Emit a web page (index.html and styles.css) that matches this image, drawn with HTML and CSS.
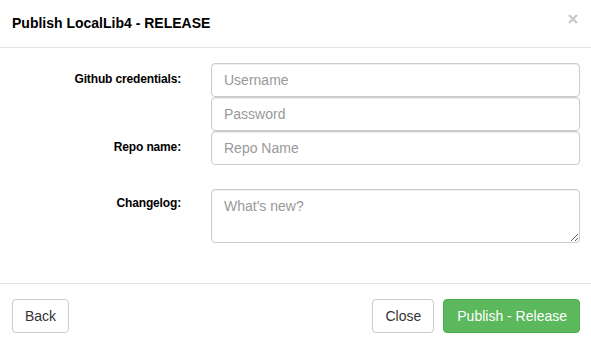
FILE: index.html
```html
<!DOCTYPE html>
<html>
<head>
<meta charset="utf-8">
<title>Publish LocalLib4 - RELEASE</title>
<link rel="stylesheet" href="styles.css">
</head>
<body>
<div class="modal">
  <div class="modal-header">
    <h4 class="modal-title">Publish LocalLib4 - RELEASE</h4>
    <button class="close" type="button" aria-label="Close">
      <svg width="10" height="10" viewBox="0 0 10 10"><path d="M1 1L9 9M9 1L1 9" stroke="#c7c7c7" stroke-width="2.2" stroke-linecap="butt"/></svg>
    </button>
  </div>
  <div class="modal-body">
    <form class="form">
      <label class="control-label">Github credentials:</label>
      <div class="stack">
        <input class="form-control" type="text" placeholder="Username">
        <input class="form-control" type="password" placeholder="Password">
      </div>
      <label class="control-label">Repo name:</label>
      <div class="stack">
        <input class="form-control" type="text" placeholder="Repo Name">
      </div>
      <label class="control-label changelog-label">Changelog:</label>
      <div class="stack changelog">
        <textarea class="form-control textarea" rows="2" placeholder="What's new?"></textarea>
      </div>
    </form>
  </div>
  <div class="modal-footer">
    <button class="btn" type="button">Back</button>
    <div class="right">
      <button class="btn" type="button">Close</button>
      <button class="btn btn-success" type="button">Publish - Release</button>
    </div>
  </div>
</div>
</body>
</html>
```

FILE: styles.css
```css
html, body {
  margin: 0;
  padding: 0;
  background: #fff;
}
body {
  font-family: "Liberation Sans", Arial, sans-serif;
  font-size: 14px;
  line-height: 20px;
  color: #333;
}
.modal {
  width: 591px;
  height: 345px;
  background: #fff;
  display: flex;
  flex-direction: column;
}
.modal-header {
  display: flex;
  align-items: flex-start;
  justify-content: space-between;
  padding: 12px 12px 13px 12px;
  border-bottom: 1px solid #e5e5e5;
}
.modal-title {
  margin: 0;
  font-size: 14px;
  line-height: 22px;
  font-weight: bold;
  color: #000;
}
.close {
  background: none;
  border: 0;
  padding: 0;
  margin: 2px 1px 0 0;
  width: 10px;
  height: 10px;
  display: flex;
  cursor: pointer;
}
.modal-body {
  padding: 15px 11px 40px 12px;
}
.form {
  display: grid;
  grid-template-columns: 169px 1fr;
  column-gap: 30px;
}
.control-label {
  text-align: right;
  font-size: 12px;
  font-weight: bold;
  line-height: 20px;
  letter-spacing: -0.15px;
  padding-top: 6px;
  color: #000;
}
.changelog-label {
  padding-top: 4px;
  margin-top: 24px;
}
.changelog {
  margin-top: 24px;
}
.stack {
  display: flex;
  flex-direction: column;
}
.form-control {
  box-sizing: border-box;
  display: block;
  width: 100%;
  height: 34px;
  margin: 0;
  padding: 6px 12px;
  font-family: "Liberation Sans", Arial, sans-serif;
  font-size: 14px;
  line-height: 20px;
  color: #555;
  background: #fff;
  border: 1px solid #ccc;
  border-radius: 4px;
  box-shadow: inset 0 1px 1px rgba(0, 0, 0, 0.075);
}
.form-control::placeholder {
  color: #999;
}
.textarea {
  height: 54px;
  resize: vertical;
}
.modal-footer {
  display: flex;
  justify-content: space-between;
  align-items: flex-start;
  padding: 15px 11px 12px 12px;
  border-top: 1px solid #e5e5e5;
}
.right {
  display: flex;
  gap: 9px;
}
.btn {
  box-sizing: border-box;
  height: 34px;
  padding: 6px 12px;
  font-family: "Liberation Sans", Arial, sans-serif;
  font-size: 14px;
  line-height: 20px;
  color: #333;
  background: #fff;
  border: 1px solid #ccc;
  border-radius: 4px;
  cursor: pointer;
}
.btn-success {
  padding: 6px 12px 6px 13px;
  color: #fff;
  background: #5cb85c;
  border-color: #4cae4c;
}
```
